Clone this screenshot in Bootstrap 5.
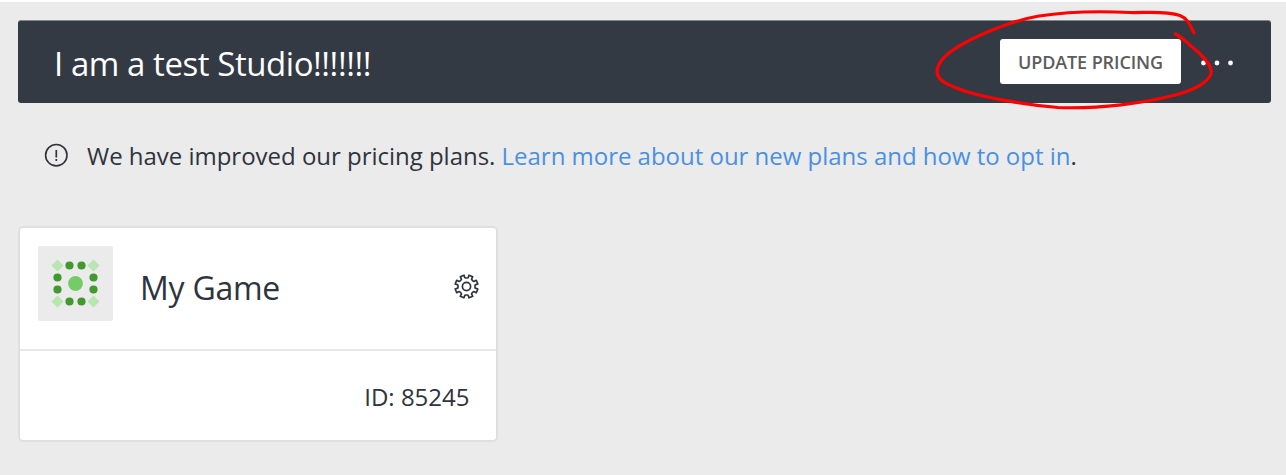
<!DOCTYPE html>
<html lang="en">
<head>
<meta charset="utf-8">
<meta name="viewport" content="width=device-width, initial-scale=1">
<title>Studio</title>
<link href="https://cdn.jsdelivr.net/npm/bootstrap@5.3.0/dist/css/bootstrap.min.css" rel="stylesheet">
<style>
body{background:#ebebeb;color:#2e343d;font-family:"Open Sans",sans-serif;border-top:2px solid #fff;height:475px;overflow:hidden}
.page{padding:18px 15px 0 18px}
.studio-bar{height:83px;background:#333a44;border-top:1px solid #7e8789;border-radius:3px;padding:0 37px 1px 36px}
.studio-name{font-size:33px;line-height:1;letter-spacing:-.44px;margin-top:3px}
.btn-price{width:181px;height:45px;border-radius:3px;background:#fff;color:#5c5c5c;font-weight:600;font-size:18px;letter-spacing:-.1px;line-height:46px;padding:0;border:0}
.dots{margin-top:1px}
.notice{font-size:24px;letter-spacing:-.02px;line-height:36px;margin-top:35px;padding-left:26px}
.notice-icon{margin-top:5px}
.notice-text{margin-left:19px}
.notice a{color:#4a90e2}
.game{width:480px;height:216px;margin-top:52px;border:2px solid #dfdfdf;border-radius:5px}
.game-top{height:123px;border-bottom:2px solid #e8e8e8;padding:0 17px 0 18px}
.avatar{margin-top:18px}
.game-name{font-size:32px;letter-spacing:-.25px;line-height:40px;margin:40px 0 0 27px}
.gear{margin-top:45.5px}
.game-id{font-size:24px;line-height:36px;padding:28px 26.500px 0 0}
.pen{margin-top:-2px}
</style>
</head>
<body>
<main class="page position-relative">
  <header class="studio-bar d-flex align-items-center text-white">
    <h1 class="studio-name fw-normal mb-0">I am a test Studio!!!!!!!</h1>
    <button class="btn btn-price ms-auto">UPDATE PRICING</button>
    <svg class="dots ms-3" width="37" height="10" viewBox="0 0 37 10" fill="#fff"><circle cx="6.500" cy="6" r="2.400"/><circle cx="20" cy="6" r="2.400"/><circle cx="33.500" cy="6" r="2.400"/></svg>
  </header>
  <div class="notice d-flex">
    <svg class="notice-icon flex-shrink-0" width="24" height="24" viewBox="0 0 24 24" fill="none" stroke="#2e343d"><circle cx="12.300" cy="12.200" r="10.700" stroke-width="1.600"/><path d="M12.300 7v7.500M12.300 16v2" stroke-width="1.700"/></svg>
    <span class="notice-text text-nowrap">We have improved our pricing plans. <a href="#" class="text-decoration-none">Learn more about our new plans and how to opt in</a>.</span>
  </div>
  <section class="game bg-white">
    <div class="game-top d-flex">
      <svg class="avatar" width="75" height="75" viewBox="0 0 75 75"><rect width="75" height="75" rx="2" fill="#ebebeb"/>
        <path fill="#b8e6b1" d="M19.500 13.500l6 6-6 6-6-6zM55.500 13.500l6 6-6 6-6-6zM19.500 49.500l6 6-6 6-6-6zM55.500 49.500l6 6-6 6-6-6z"/>
        <g fill="#42992f"><circle cx="31.500" cy="19.500" r="4.100"/><circle cx="43.500" cy="19.500" r="4.100"/><circle cx="31.500" cy="55.500" r="4.100"/><circle cx="43.500" cy="55.500" r="4.100"/><circle cx="19.500" cy="31.500" r="4.100"/><circle cx="19.500" cy="43.500" r="4.100"/><circle cx="55.500" cy="31.500" r="4.100"/><circle cx="55.500" cy="43.500" r="4.100"/></g>
        <circle cx="37.500" cy="37.500" r="7.400" fill="#74cc66"/></svg>
      <h2 class="game-name fw-normal">My Game</h2>
      <svg id="gear" class="gear ms-auto" width="25" height="25" viewBox="-12.500 -12.500 25 25" fill="none" stroke="#2e343d" stroke-width="1.700" stroke-linejoin="round"><circle r="4.100"/><path/></svg>
    </div>
    <div class="game-id text-end">ID: 85245</div>
  </section>
  <svg class="pen position-absolute top-0 start-0 pe-none" width="1286" height="120" fill="none" stroke="#f00" stroke-width="3.200" stroke-linecap="round" stroke-linejoin="round"><path d="M1194 33C1189 22 1186 18 1180 15.500C1165 10.500 1145 13 1130 12.500C1100 11 1065 12 1039 16C1010 21 972 37 953 50C943 57 937 65 937 72C938 82 951 86 966 91.500C990 99 1030 105 1058 107.500C1100 109 1145 103 1175 95C1195 90 1208 82 1211 74C1213 65 1199 52 1191 46C1185 41 1182 37 1175.500 34"/></svg>
</main>
<script src="https://cdn.jsdelivr.net/npm/bootstrap@5.3.0/dist/js/bootstrap.bundle.min.js"></script>
<script>
// Gear outline: eight teeth with the valleys on the axes
const pts = [];
for (let i = 0; i < 8; i++) {
  const c = 22.5 + i * 45;
  for (const [o, r] of [[-19, 8.5], [-12, 8.9], [-10, 11.6], [10, 11.6], [12, 8.9], [19, 8.5]]) {
    const a = (c + o) * Math.PI / 180;
    pts.push((r * Math.cos(a)).toFixed(2) + ',' + (r * Math.sin(a)).toFixed(2));
  }
}
document.querySelector('#gear path').setAttribute('d', 'M' + pts.join('L') + 'Z');
</script>
</body>
</html>
